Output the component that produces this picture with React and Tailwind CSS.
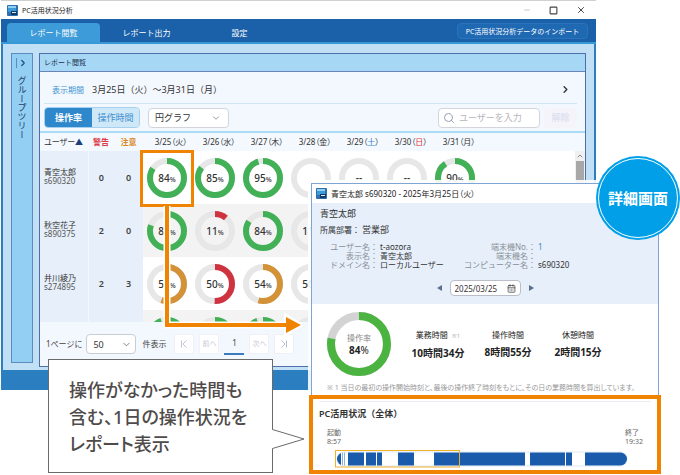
import { ChevronDown, ChevronRight, Search, X, Square, Minus, CalendarDays, ChevronUp } from "lucide-react";

const GREEN = "#41b057";
const RED = "#cf3340";
const AMBER = "#d39237";

const DAYS = [
  { date: "3/25", day: "火" },
  { date: "3/26", day: "水" },
  { date: "3/27", day: "木" },
  { date: "3/28", day: "金" },
  { date: "3/29", day: "土", tone: "text-[#2f86d8]" },
  { date: "3/30", day: "日", tone: "text-[#e0303a]" },
  { date: "3/31", day: "月" },
];

const ROWS = [
  { name: "青空太郎", id: "s690320", warn: 0, caution: 0, rates: [84, 85, 95, "", "--", "--", 90] },
  { name: "秋空花子", id: "s890375", warn: 2, caution: 0, rates: [80, 11, 84, 11, "--", "--", 88] },
  { name: "井川綾乃", id: "s274895", warn: 2, caution: 3, rates: [55, 50, 54, 50, "--", "--", 60] },
  { name: "", id: "", warn: "", caution: "", rates: [94, 88, 94, "", "--", "--", 92] },
];

function colorFor(rate) {
  if (rate < 52) return RED;
  if (rate < 70) return AMBER;
  return GREEN;
}

function Ring({ rate, color, track, size, stroke }) {
  const r = (size - stroke) / 2;
  const length = 2 * Math.PI * r;
  const c = size / 2;
  return (
    <svg width={size} height={size} viewBox={`0 0 ${size} ${size}`} className="block">
      <circle cx={c} cy={c} r={r} fill="none" stroke={track} strokeWidth={stroke} />
      {rate > 0 && (
        <circle
          cx={c}
          cy={c}
          r={r}
          fill="none"
          stroke={color}
          strokeWidth={stroke}
          strokeDasharray={`${(length * rate) / 100} ${length}`}
          transform={`rotate(-90 ${c} ${c})`}
        />
      )}
    </svg>
  );
}

function RateDonut({ value }) {
  const isRate = typeof value === "number";
  return (
    <div className="mx-auto grid w-10 place-items-center">
      <div className="col-start-1 row-start-1">
        <Ring rate={isRate ? value : 0} color={isRate ? colorFor(value) : GREEN} track="#e7e7e7" size={40} stroke={6} />
      </div>
      <span className="col-start-1 row-start-1 text-[10px] leading-none font-medium whitespace-nowrap text-[#333]">
        {value}
        {isRate && <span className="text-[7px]">%</span>}
      </span>
    </div>
  );
}

function AppIcon() {
  return (
    <svg width="11" height="11" viewBox="0 0 11 11" className="block shrink-0">
      <rect width="11" height="11" rx="1" fill="#2f6fae" />
      <rect x="1" y="1" width="8" height="6" fill="#8fd0f2" />
      <rect x="1" y="3" width="8" height="4" fill="#3c9bd8" />
      <rect x="4" y="6" width="6" height="4" fill="#123a68" />
      <rect x="5" y="7" width="4" height="1" fill="#d6ecf8" />
    </svg>
  );
}

function UserTable() {
  return (
    <table className="w-full table-fixed border-collapse">
      <colgroup>
        <col className="w-[48px]" />
        <col className="w-[26px]" />
        <col className="w-[29px]" />
        {DAYS.map((d) => (
          <col key={d.date} className="w-[48px]" />
        ))}
        <col />
      </colgroup>
      <thead>
        <tr className="h-[18px] bg-[#f3f9fe] text-[8px] leading-none whitespace-nowrap text-[#333] [font-feature-settings:'palt']">
          <th className="pl-1 text-left font-normal">
            ユーザー<span className="text-[#1c3f7c]">▲</span>
          </th>
          <th className="font-bold text-[#dc3a44]">警告</th>
          <th className="font-bold text-[#d98a2b]">注意</th>
          {DAYS.map((d) => (
            <th key={d.date} className="pl-2 font-normal">
              {d.date}（<span className={d.tone}>{d.day}</span>）
            </th>
          ))}
          <th />
        </tr>
      </thead>
      <tbody>
        {ROWS.map((row, i) => (
          <tr key={i} className={i % 2 ? "h-[53px] bg-[#f3f3f3]" : "h-[53px] bg-white"}>
            <td className="border-r border-[#f4f8fd] bg-[#e6effa] p-0 pb-1 pl-1 text-[8px] leading-[9px] whitespace-nowrap text-[#333]">
              <div>{row.name}</div>
              <div className="text-[#555]">{row.id}</div>
            </td>
            <td className="bg-[#e6effa] text-center text-[9px] leading-none font-semibold text-[#444]">{row.warn}</td>
            <td className="bg-[#e6effa] text-center text-[9px] leading-none font-semibold text-[#444]">{row.caution}</td>
            {row.rates.map((rate, j) => (
              <td key={j} className="relative p-0">
                <RateDonut value={rate} />
                {i === 0 && j === 0 && <div className="absolute -inset-x-[3px] -top-px -bottom-[3px] border-3 border-[#f08300]" />}
              </td>
            ))}
            <td />
          </tr>
        ))}
      </tbody>
    </table>
  );
}

function PagerButton({ children, label }) {
  return (
    <button
      aria-label={label}
      className="flex h-5 w-5 items-center justify-center border border-[#f0f1f7] bg-white text-[7px] leading-none whitespace-nowrap text-[#c9c9d8]"
    >
      {children}
    </button>
  );
}

function ReportPanel() {
  return (
    <section className="flex min-w-0 flex-1 flex-col border border-[#4f6fa8] bg-[#f3f8fe]">
      <h2 className="flex h-[18px] items-center border-b border-[#6a84b8] bg-[#a6d8f6] pl-1 text-[7px] leading-none text-[#1d2f50]">
        レポート閲覧
      </h2>
      <div className="mr-2 ml-1 flex h-8 items-center border-b border-[#cfe6f5] pt-1 pr-1.5 pl-2 leading-none">
        <span className="text-[8px] text-[#3f93d2]">表示期間</span>
        <span className="ml-2 text-[9px] whitespace-nowrap text-[#333]">3月25日（火）～3月31日（月）</span>
        <button aria-label="次の期間" className="ml-auto text-[#333]">
          <ChevronRight size={11} strokeWidth={3} />
        </button>
      </div>
      <div className="flex items-center border-b-2 border-[#a9dcf6] py-[3px] pr-2 pl-1 text-[9px] leading-none whitespace-nowrap">
        <div className="flex h-[21px] w-24 overflow-hidden rounded-sm border border-[#a3d1ef]">
          <button className="w-12 bg-[#2f88cb] font-bold text-white">操作率</button>
          <button className="w-12 bg-[#cfe8f8] text-[#3c8fcf]">操作時間</button>
        </div>
        <div className="relative ml-2 w-[81px]">
          <select aria-label="グラフの種類" className="h-5 w-full appearance-none rounded-sm border border-[#d2d5dc] bg-white pl-1.5 text-[#333]">
            <option>円グラフ</option>
          </select>
          <ChevronDown size={10} className="pointer-events-none absolute top-[5px] right-2 text-[#888]" />
        </div>
        <label className="ml-auto flex h-5 w-[102px] items-center rounded-sm border border-[#d2d5dc] bg-white pl-1">
          <Search size={12} className="shrink-0 text-[#9aa0b5]" />
          <input aria-label="ユーザーを入力" placeholder="ユーザーを入力" className="ml-1 w-full min-w-0 text-[9px] outline-none placeholder:text-[#b5b5bd]" />
        </label>
        <button className="ml-1 h-5 w-[33px] rounded-sm bg-[#f5f4fb] text-[9px] font-bold text-[#e0e1f1]">解除</button>
      </div>
      <div className="relative h-[189px] overflow-hidden">
        <UserTable />
        <div className="absolute top-[18px] right-0 bottom-0 flex w-[10px] flex-col items-center bg-[#f0f0f0]">
          <ChevronUp size={8} className="my-px shrink-0 text-[#555]" />
          <div className="h-28 w-2 bg-[#a8a8a8]" />
        </div>
      </div>
      <div className="flex flex-1 items-center pl-1.5 text-[8px] leading-none whitespace-nowrap text-[#444]">
        <label htmlFor="per-page">1ページに</label>
        <div className="relative ml-1 w-[50px]">
          <select id="per-page" className="h-5 w-full appearance-none rounded-sm border border-[#c8ccd4] bg-white pl-1.5 text-[9px] text-[#333]">
            <option>50</option>
          </select>
          <ChevronDown size={11} className="pointer-events-none absolute top-[5px] right-1 text-[#777f95]" />
        </div>
        <span className="ml-1.5">件表示</span>
        <nav className="ml-2 flex gap-[5px]">
          <PagerButton label="最初のページ">
            <svg width="8" height="8" viewBox="0 0 8 8" fill="none" stroke="#c2c5d6">
              <path d="M1.5 0.5V7.5M6.5 0.5L3 4L6.5 7.5" />
            </svg>
          </PagerButton>
          <PagerButton>前へ</PagerButton>
          <button className="flex h-[21px] w-5 items-center justify-center border-b-2 border-[#3a7abd] text-[8px] leading-none text-[#444]">1</button>
          <PagerButton>次へ</PagerButton>
          <PagerButton label="最後のページ">
            <svg width="8" height="8" viewBox="0 0 8 8" fill="none" stroke="#b9bdd0">
              <path d="M6.5 0.5V7.5M1.5 0.5L5 4L1.5 7.5" />
            </svg>
          </PagerButton>
        </nav>
      </div>
    </section>
  );
}

function MainWindow() {
  return (
    <div className="mr-[84px] ml-px flex flex-col border-t border-[#d0d0d0]">
      <header className="flex h-[18px] items-center bg-white pl-1.5 leading-none text-[#222]">
        <AppIcon />
        <h1 className="ml-1 text-[7px] whitespace-nowrap">PC活用状況分析</h1>
        <div className="ml-auto flex items-center gap-[18px] pr-2.5">
          <button aria-label="最小化"><Minus size={8} className="text-[#aaa]" /></button>
          <button aria-label="最大化"><Square size={9} strokeWidth={3} className="text-[#444]" /></button>
          <button aria-label="閉じる"><X size={10} strokeWidth={2} /></button>
        </div>
      </header>
      <nav className="flex h-[25px] items-end border-b-2 border-[#3798d6] bg-[#1b61aa] pl-1.5 text-[8px] leading-none whitespace-nowrap text-white">
        <button className="h-[19px] w-[93px] rounded-t-sm bg-[#3c9bd8]">レポート閲覧</button>
        <button className="h-[19px] w-[93px]">レポート出力</button>
        <button className="h-[19px] w-[93px]">設定</button>
        <button className="mr-2 mb-[3px] ml-auto h-4 w-[131px] rounded-sm border border-[#2a74bb] bg-[#1f69b2] text-[7px]">
          PC活用状況分析データのインポート
        </button>
      </nav>
      <div className="flex h-[346px] gap-1.5 border-x-2 border-b-20 border-[#2b7ebf] bg-[#c1dff5] px-2 pt-[9px] pb-[3px]">
        <aside className="mb-1 flex w-[22px] shrink-0 flex-col items-center border border-[#5b8cc0] bg-[#93cff2] pt-1">
          <button aria-label="グループツリーを開く" className="flex items-center gap-px text-[#1f4f86]">
            <span className="h-[10px] w-px bg-[#5b8cc0]" />
            <ChevronRight size={10} strokeWidth={3} />
          </button>
          <span className="mt-2 text-[9px] leading-none text-[#22406c] [writing-mode:vertical-rl]">グループツリー</span>
        </aside>
        <ReportPanel />
      </div>
    </div>
  );
}

function Field({ label, value, valueTone }) {
  return (
    <>
      <dt className="text-right text-[#8a8f98]">{label}：</dt>
      <dd className={valueTone}>{value}</dd>
    </>
  );
}

function Stat({ label, note, value }) {
  return (
    <div className="flex w-[70px] flex-col items-center whitespace-nowrap">
      <span className="text-[8px] leading-[10px] text-[#222]">
        {label}
        {note && <span className="ml-1 text-[6px] text-[#aaa]">{note}</span>}
      </span>
      <span className="mt-[7px] text-[10px] leading-[10px] font-bold text-[#222] [font-feature-settings:'palt']">{value}</span>
    </div>
  );
}

// Active spans along the day, in units of one 290th of the bar.
const ACTIVE = [
  [0, 4], [11, 16], [29, 10], [40, 5], [61, 16], [97, 91], [193, 35], [229, 6], [248, 42],
];

function Timeline() {
  return (
    <svg viewBox="0 0 293 18" className="ml-4 block h-[18px] w-[293px]">
      <defs>
        <clipPath id="pill">
          <rect x="2" y="2.5" width="290" height="13" rx="6.5" />
        </clipPath>
      </defs>
      <rect x="2" y="2" width="290" height="14" rx="7" fill="#fff" stroke="#dfe8f5" />
      <g clipPath="url(#pill)" fill="#1a5cab">
        {ACTIVE.map(([x, w]) => (
          <rect key={x} x={x + 2} y="2" width={w} height="14" />
        ))}
        <rect x="7" y="2" width="1" height="14" fill="#8fb0dc" />
        <rect x="9" y="2" width="1" height="14" fill="#8fb0dc" />
      </g>
      <rect x="0.5" y="0.5" width="124" height="16.5" fill="none" stroke="#efb02c" />
    </svg>
  );
}

function DetailWindow() {
  return (
    <div className="absolute top-[180px] right-[18px] left-[308px] bg-white/90 p-[3px] pb-0">
      <div className="border border-b-0 border-[#7fa4d6] bg-white">
        <header className="flex h-[19px] items-center pl-1 text-[8px] leading-none whitespace-nowrap text-[#222] [font-feature-settings:'palt']">
          <AppIcon />
          <h2 className="ml-1">青空太郎 s690320 - 2025年3月25日（火）</h2>
        </header>
        <div className="h-[101px] bg-[#e6effa] px-2 pt-1.5 leading-none whitespace-nowrap text-[#333]">
          <p className="text-[9px] leading-[10px]">青空太郎</p>
          <p className="mt-1.5 text-[8px] leading-[10px]">
            所属部署：<span className="ml-0.5 text-[9px]">営業部</span>
          </p>
          <div className="mt-[7px] flex text-[8px] leading-[9px]">
            <dl className="grid w-[144px] shrink-0 grid-cols-[58px_auto] gap-x-0.5">
              <Field label="ユーザー名" value="t-aozora" />
              <Field label="表示名" value="青空太郎" />
              <Field label="ドメイン名" value="ローカルユーザー" />
            </dl>
            <dl className="grid grid-cols-[72px_auto] gap-x-0.5">
              <Field label="端末機No." value="1" valueTone="text-[#3a86cc]" />
              <Field label="端末機名" value="" />
              <Field label="コンピューター名" value="s690320" />
            </dl>
          </div>
          <div className="mt-[11px] flex items-center justify-center gap-2 text-[#5c6f90]">
            <button aria-label="前日">
              <svg width="5" height="6" viewBox="0 0 5 6" className="block"><path d="M5 0V6L0 3Z" fill="currentColor" /></svg>
            </button>
            <label className="flex h-4 w-[71px] items-center rounded-sm border border-[#b9bec8] bg-white px-1">
              <input aria-label="日付" defaultValue="2025/03/25" className="w-full min-w-0 text-[8px] text-[#333] outline-none" />
              <CalendarDays size={9} className="shrink-0 text-[#444]" />
            </label>
            <button aria-label="翌日">
              <svg width="5" height="6" viewBox="0 0 5 6" className="block"><path d="M0 0V6L5 3Z" fill="currentColor" /></svg>
            </button>
          </div>
        </div>
        <div className="px-[15px] pt-2 pb-[7px]">
          <div className="flex items-center">
            <div className="grid place-items-center">
              <div className="col-start-1 row-start-1">
                <Ring rate={78} color="#4bb440" track="#d3d3d3" size={64} stroke={8} />
              </div>
              <div className="col-start-1 row-start-1 text-center">
                <div className="text-[8px] leading-[13px] text-[#888]">操作率</div>
                <div className="text-[10px] leading-[13px] font-bold text-[#222]">
                  84<span className="font-normal">%</span>
                </div>
              </div>
            </div>
            <div className="ml-3 flex">
              <Stat label="業務時間" note="※1" value="10時間34分" />
              <Stat label="操作時間" value="8時間55分" />
              <Stat label="休憩時間" value="2時間15分" />
            </div>
          </div>
          <p className="mt-2 text-[7px] leading-[8px] whitespace-nowrap text-[#999] [font-feature-settings:'palt']">
            ※ 1 当日の最初の操作開始時刻と、最後の操作終了時刻をもとに、その日の業務時間を算出しています。
          </p>
        </div>
      </div>
      <section className="relative -mt-1 -mr-[2px] -ml-[2px] h-[79px] border-4 border-[#f08300] bg-white px-1.5 pt-0.5">
        <div className="h-px bg-[#ececf2]" />
        <h3 className="mt-[7px] text-[9px] leading-[10px] font-semibold text-[#333]">PC活用状況（全体）</h3>
        <div className="mt-[9px] flex justify-between px-2 text-[7px] leading-[9px] text-[#666]">
          <div>起動<br />8:57</div>
          <div>終了<br />19:32</div>
        </div>
        <div className="mt-1">
          <Timeline />
        </div>
      </section>
    </div>
  );
}

function FlowArrow() {
  return (
    <svg width="140" height="136" viewBox="0 0 140 136" className="absolute top-[202px] left-[162px]">
      <path d="M5 4V123H126" fill="none" stroke="#fff" strokeWidth="7" />
      <path d="M122 110L142 123L122 136Z" fill="#fff" />
      <path d="M5 3V123H126" fill="none" stroke="#f08300" strokeWidth="4" />
      <path d="M124 115L139 123L124 131Z" fill="#f08300" />
    </svg>
  );
}

function Callout() {
  return (
    <div className="absolute top-[359px] left-[48px] flex">
      <p className="h-[114px] w-[225px] border border-[#6a6a6a] bg-white pt-[17px] pl-5 text-[18px] leading-[27px] font-medium whitespace-nowrap text-[#4f4b4a] [font-feature-settings:'palt']">
        操作がなかった時間も
        <br />
        含む、1日の操作状況を
        <br />
        レポート表示
      </p>
      <svg width="33" height="20" viewBox="0 0 33 20" className="-ml-px mt-[70px] block">
        <path d="M0 0.5L32 10L0 19.5Z" fill="#fff" />
        <path d="M0.5 0.5L32 10L0.5 19.5" fill="none" stroke="#6a6a6a" />
      </svg>
    </div>
  );
}

function Badge() {
  return (
    <div className="absolute top-[156px] right-0 rounded-full bg-[#009fe8] p-[2px]">
      <div className="flex h-20 w-20 items-center justify-center rounded-full border border-white text-[15px] leading-none font-bold whitespace-nowrap text-white">
        詳細画面
      </div>
    </div>
  );
}

export default function App() {
  return (
    <main className="relative min-h-screen overflow-hidden bg-white font-['Noto_Sans','Noto_Sans_CJK_JP',sans-serif]" lang="ja">
      <MainWindow />
      <DetailWindow />
      <FlowArrow />
      <Callout />
      <Badge />
    </main>
  );
}
